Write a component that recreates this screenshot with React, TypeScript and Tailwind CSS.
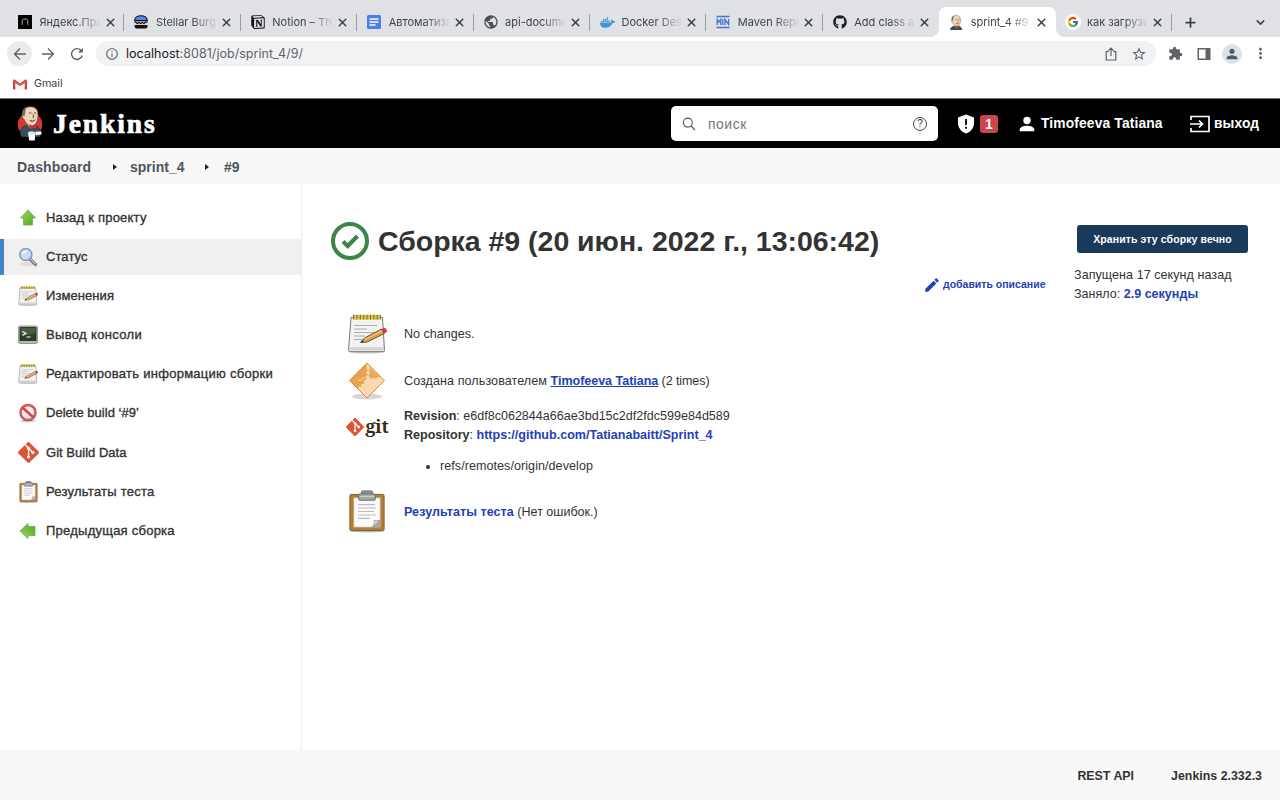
import type { ReactNode } from 'react';
import { X, Plus, ChevronDown } from 'lucide-react';
import { FaDocker, FaGithub } from 'react-icons/fa';
import { FcGoogle } from 'react-icons/fc';
import { SiGit, SiNotion } from 'react-icons/si';
import {
  MdExtension,
  MdInfoOutline,
  MdModeEdit,
  MdMoreVert,
  MdPerson,
  MdPublic,
  MdStarBorder,
} from 'react-icons/md';

const svg = 'shrink-0 block';

function PracticumIcon() {
  return (
    <svg viewBox="0 0 14 14" className={`${svg} size-[14px]`}>
      <rect width="14" height="14" fill="#000" />
      <path d="M4.200 9.800V6c0-1.200.7-1.900 1.700-1.900h2.200c1 0 1.700.7 1.700 1.900v3.800" fill="none" stroke="#a9a9a9" strokeWidth="1" />
    </svg>
  );
}

function BurgerIcon() {
  return (
    <svg viewBox="0 0 14 14" className={`${svg} size-[14px]`}>
      <path d="M.7 5.600C.7 2.600 3.400.7 7 .7s6.300 1.900 6.300 4.900z" fill="#4c86ee" stroke="#111" strokeWidth="1.100" />
      <path d="M.4 7.200h1.500l1.300 1.500 1.700-1.500 1.700 1.500 1.700-1.500L10 8.700l1.500-1.500h2.100" fill="none" stroke="#111" strokeWidth="1.200" />
      <path d="M.5 10h13v1.500c0 1.200-1 2-2 2h-9c-1 0-2-.8-2-2z" fill="#111" />
    </svg>
  );
}

function DocsIcon() {
  return (
    <svg viewBox="0 0 14 14" className={`${svg} size-[14px]`}>
      <rect width="14" height="14" rx="1.500" fill="#4a80ec" />
      <path d="M2.500 4h9M2.500 7h9M2.500 10h6" stroke="#fff" strokeWidth="1.300" />
    </svg>
  );
}

function MavenIcon() {
  return (
    <svg viewBox="0 0 14 14" className={`${svg} size-[14px]`}>
      <path d="M.5 1.500h13M.5 12.500h13" stroke="#4376ce" strokeWidth="1.400" />
      <path d="M1.200 10V4.500L3 7l1.700-2.500V10M6.800 4v6M9 10V4.500l3.600 5V4" fill="none" stroke="#4376ce" strokeWidth="1.300" />
    </svg>
  );
}

function ButlerIcon({ className, disc }: { className: string; disc: boolean }) {
  return (
    <svg viewBox={disc ? '0 0 26 36' : '2 0 22 27'} className={`${svg} ${className}`}>
      {disc && <circle cx="13" cy="19" r="12.600" fill="#d33833" />}
      <path d="M3.500 24c2-3 5-4 8-4h6c3.500.6 5.500 3 6 6v5.500l-6 .5H5c-2-2-2.500-5-1.500-8z" fill="#335061" stroke="#1b2a35" strokeWidth=".7" />
      <path d="M10 18l3 6 4-5v-3h-6z" fill="#fff" />
      <path d="M5.500 8.500C5 3.500 8.500.8 13.500.8c5 0 7.700 3 7.700 7.500 0 6-1.600 12-6.200 12-4.300 0-6.800-3.300-8-6.600-1.500-.4-2.700-3.400-1.500-5.200z" fill="#f0d6b7" stroke="#5b4a3c" strokeWidth=".7" />
      <path d="M5.300 9.500C4.300 5 6.500 1.500 10.800 1.100c-2.500 1.700-2.700 3.900-2.600 6.400-.7.500-.8 2-.7 3.500-.8-.6-1.500-1.300-2.200-1.500z" fill="#6d6b6d" />
      <path d="M12 7.500q1.500-1 2.500 0M17 7.500q1.500-1 2.500 0M16 8.500l1 3-1.400.5M13 14.800q3 1.700 5.500-.7" fill="none" stroke="#4c3a30" strokeWidth=".9" />
      <path d="M12.500 15.200q3 2.400 5.500-.5" fill="none" stroke="#a55a4c" strokeWidth=".7" />
      <path d="M12.200 19.500l3.300 1.400 4-1.200.6 3.800-4.200-1-3.900 1.400z" fill="#d33833" stroke="#7e1512" strokeWidth=".4" />
      {disc && (
        <>
          <path d="M11 27h7.500l-.6 8.500h-5.800z" fill="#fff" />
          <path d="M11 27c2-1.300 5-1.300 7.500 0v2H11z" fill="#dce3e8" />
          <path d="M18.500 26.500l6-.5.500 3.200-6 .8z" fill="#f2f2f2" />
        </>
      )}
    </svg>
  );
}

type TabData = { title: string; icon: ReactNode; active?: boolean; divider?: boolean };

const tabs: TabData[] = [
  { title: 'Яндекс.Пра', icon: <PracticumIcon />, divider: true },
  { title: 'Stellar Burg', icon: <BurgerIcon />, divider: true },
  { title: 'Notion – Th', icon: <SiNotion className="size-[14px] text-[#111]" />, divider: true },
  { title: 'Автоматиза', icon: <DocsIcon />, divider: true },
  { title: 'api-docume', icon: <MdPublic className="-m-px size-4 text-[#4d5156]" />, divider: true },
  { title: 'Docker Des', icon: <FaDocker className="size-[15px] text-[#3d94d6]" />, divider: true },
  { title: 'Maven Repo', icon: <MavenIcon />, divider: true },
  { title: 'Add class a', icon: <FaGithub className="size-[14px] text-[#1b1f23]" /> },
  { title: 'sprint_4 #9', icon: <ButlerIcon className="h-[15px] w-[14px]" disc={false} />, active: true },
  {
    title: 'как загрузи',
    icon: (
      <span className="-m-px grid size-4 place-items-center rounded-full bg-white">
        <FcGoogle className="size-3" />
      </span>
    ),
    divider: true,
  },
];

function Tab({ title, icon, active, divider }: TabData) {
  return (
    <div
      className={`relative mt-[7px] flex h-[30px] w-[116.400px] shrink-0 items-center pl-[10px] ${
        active ? 'rounded-t-[7px] bg-white' : ''
      }`}
    >
      {active && (
        <>
          <span className="absolute bottom-0 -left-2 size-2 bg-[radial-gradient(circle_at_0_0,transparent_7.500px,white_8px)]" />
          <span className="absolute -right-2 bottom-0 size-2 bg-[radial-gradient(circle_at_100%_0,transparent_7.500px,white_8px)]" />
        </>
      )}
      <span className="grid h-4 w-[14px] place-items-center">{icon}</span>
      <span className="ml-[7.500px] w-[60px] text-[11px] leading-4 whitespace-nowrap text-[#3f4246] [mask-image:linear-gradient(to_right,black_36px,transparent_62px)]">
        {title}
      </span>
      <X className="ml-[4px] size-[13px] text-[#3c4043]" strokeWidth={2.700} />
      {divider && <span className="absolute top-[7px] right-0 h-[17px] w-px bg-[#9b9ea3]" />}
    </div>
  );
}

function BrowserChrome() {
  return (
    <div className="font-[Inter,sans-serif]">
      <div className="flex h-[37px] bg-[#dfe1e5] pl-2">
        {tabs.map((t) => (
          <Tab key={t.title} {...t} />
        ))}
        <Plus className="mt-[15px] ml-[11px] size-[15px] text-[#3c4043]" strokeWidth={2.800} />
        <ChevronDown className="mt-[16px] mr-[13px] ml-auto size-[13px] text-[#3c4043]" strokeWidth={2.800} />
      </div>
      <div className="flex h-[33px] items-center bg-white pr-[11px] pl-[7px] text-[#5f6368]">
        <span className="grid size-[25px] place-items-center rounded-full bg-[#ebebec]">
          <svg viewBox="0 0 14 14" className="size-[14px]" fill="none" stroke="#5f6368" strokeWidth="1.300">
            <path d="M13 7H1.500M7 1.500L1.500 7 7 12.500" />
          </svg>
        </span>
        <svg viewBox="0 0 14 14" className="ml-[9px] size-[14px]" fill="none" stroke="#5f6368" strokeWidth="1.300">
          <path d="M1 7h11.500M7 1.500L12.500 7 7 12.500" />
        </svg>
        <svg viewBox="0 0 14 14" className="ml-[15px] size-[14px]" fill="none" stroke="#5f6368" strokeWidth="1.400">
          <path d="M12.200 8.500A5.400 5.400 0 1 1 10.800 3.200L12 4.400" />
          <path d="M12.800.8v4.800H8z" fill="#5f6368" stroke="none" />
        </svg>
        <div className="ml-[12px] flex h-[25px] w-[1060px] items-center rounded-full bg-[#f1f2f4] pr-[9px] pl-[9px]">
          <MdInfoOutline className="size-[14px]" />
          <span className="ml-[7px] text-[12.500px] leading-4 tracking-[0.030px]">
            <span className="text-[#202124]">localhost</span>:8081/job/sprint_4/9/
          </span>
          <svg viewBox="0 0 14 14" className="ml-auto size-[14px]" fill="none" stroke="#5f6368" strokeWidth="1.200">
            <path d="M4.500 4.700H2.200v8.300h9.600V4.700H9.500M7 9V1.300M4.300 3.800L7 1.100l2.700 2.700" />
          </svg>
          <MdStarBorder className="ml-[13px] size-[16px]" />
        </div>
        <MdExtension className="ml-[12px] size-[15px]" />
        <svg viewBox="0 0 14 14" className="ml-[14px] size-[14px]">
          <path d="M.5 1h13v12H.5z M2 2.500v9h6.500v-9z" fill="#5f6368" fillRule="evenodd" />
        </svg>
        <span className="ml-[11px] grid size-5 shrink-0 place-items-center rounded-full bg-[#dfe1e6]">
          <MdPerson className="size-4 text-[#4d5a6e]" />
        </span>
        <MdMoreVert className="ml-[10px] size-[17px] shrink-0" />
      </div>
      <div className="flex h-7 items-center bg-white pl-[13px]">
        <svg viewBox="0 0 14 11" className="h-[11px] w-[14px]">
          <path d="M0 1.500h2.500V10.500H0z" fill="#c5443c" />
          <path d="M11.500 1.500H14v9h-2.500z" fill="#c5443c" />
          <path d="M2.500 4v6.500h9V4L7 7.500z" fill="#f1f1f1" />
          <path d="M0 1.500C0 .4 1.300.1 2.200.8L7 4.500 11.800.8c.9-.7 2.200-.4 2.200.7v1.300L7 7 0 2.800z" fill="#db4d42" />
        </svg>
        <span className="ml-[7px] text-[10.700px] leading-4 text-[#3c4043]">Gmail</span>
      </div>
    </div>
  );
}

function Header() {
  return (
    <header className="flex h-[50px] items-center border-t border-[#777] bg-black pl-[17px] text-white">
      <ButlerIcon className="h-[35px] w-[26px]" disc />
      <span className="ml-[10px] font-['Liberation_Serif',serif] text-[27.500px] leading-7 font-bold tracking-[1.900px] [-webkit-text-stroke:0.700px_white]">
        Jenkins
      </span>
      <div className="ml-auto flex h-[35px] w-[267px] items-center rounded-[5px] bg-white pr-[11px] pl-[11px]">
        <svg viewBox="0 0 14 14" className="size-[14px]" fill="none" stroke="#555" strokeWidth="1.100">
          <circle cx="5.800" cy="5.600" r="4.500" />
          <path d="M9 9l4 4" />
        </svg>
        <span className="ml-3 pt-px text-[14px] leading-4 tracking-[0.500px] text-[#757575]">поиск</span>
        <span className="ml-auto grid size-[14px] place-items-center rounded-full border border-[#444] text-[10px] leading-3 text-[#333]">?</span>
      </div>
      <svg viewBox="0 0 18 20" className="ml-[19px] h-5 w-[18px]">
        <path d="M9 .5l8 3V9c0 5-3.300 9-8 10.500C4.300 18 1 14 1 9V3.500z" fill="#fff" />
        <path d="M9 5v6M9 12.700v2" stroke="#000" strokeWidth="1.800" />
      </svg>
      <span className="ml-[5px] grid h-[18px] w-[18px] place-items-center rounded-[3px] bg-[#cc444c] text-[14px] leading-4 font-bold">1</span>
      <svg viewBox="0 0 16 16" className="ml-[21px] size-4">
        <circle cx="8" cy="4.500" r="3.700" fill="#fff" />
        <path d="M.7 15.300v-1.600c0-2.500 3.500-4 7.300-4s7.300 1.500 7.300 4v1.600z" fill="#fff" />
      </svg>
      <span className="ml-[6px] w-[124px] pt-px text-[13.800px] leading-4 font-bold tracking-[0.150px] whitespace-nowrap">Timofeeva Tatiana</span>
      <svg viewBox="0 0 20 18" className="ml-[25px] h-[18px] w-5" fill="none" stroke="#fff" strokeWidth="1.700">
        <path d="M1 5V1.500h18v15H1V13M0 9h12.500M9 5.500L12.500 9 9 12.500" />
      </svg>
      <span className="mr-[21px] ml-1 w-[45px] pt-px text-[13.800px] leading-4 font-bold tracking-[0.100px] whitespace-nowrap">выход</span>
    </header>
  );
}

function CrumbArrow() {
  return (
    <svg viewBox="0 0 4 6" className="h-[6px] w-1">
      <path d="M0 0l4 3-4 3z" fill="#222" />
    </svg>
  );
}

function Breadcrumbs() {
  return (
    <nav className="flex h-9 items-center bg-[#f8f8f8] pt-px pl-[17px] text-[14px] leading-4 font-bold text-[#4d545d]">
      <span className="w-[96px] tracking-[0.120px]">Dashboard</span>
      <CrumbArrow />
      <span className="ml-[13px] w-[75px]">sprint_4</span>
      <CrumbArrow />
      <span className="ml-[15px]">#9</span>
    </nav>
  );
}

function ArrowIcon({ left }: { left?: boolean }) {
  return (
    <svg viewBox="0 0 20 20" className={`${svg} size-5 ${left ? '-rotate-90' : ''}`}>
      <defs>
        <linearGradient id="leaf" x1="0" y1="0" x2="1" y2="1">
          <stop offset="0" stopColor="#9bd95c" />
          <stop offset="1" stopColor="#4fa51f" />
        </linearGradient>
      </defs>
      <path d="M10 2l7.500 8H14.500v7H5.500V10H2.500z" fill="url(#leaf)" stroke="#6fa854" strokeWidth=".8" />
    </svg>
  );
}

function SearchIcon() {
  return (
    <svg viewBox="0 0 20 20" className={`${svg} size-5`}>
      <ellipse cx="9" cy="17" rx="7" ry="2" fill="#ddd" />
      <path d="M12 12l5.500 5.500" stroke="#777" strokeWidth="3.200" strokeLinecap="round" />
      <path d="M12.500 12l5 5" stroke="#c6c6c6" strokeWidth="1.100" strokeLinecap="round" />
      <circle cx="7.800" cy="7.500" r="6" fill="#c6dcf7" stroke="#8d9ab2" strokeWidth="1.600" />
      <path d="M4 7c.5-3 3-4 6-3.200C8.500 6 6 7.500 4 7z" fill="#eef5fd" />
    </svg>
  );
}

function NotepadIcon({ className }: { className: string }) {
  return (
    <svg viewBox="0 0 40 40" className={`${svg} ${className}`}>
      <ellipse cx="20" cy="37.500" rx="18" ry="2" fill="#aaa" opacity=".6" />
      <path d="M4 3.500h31.500l2 33c0 .8-.5 1.200-1.200 1.200H2.700c-.8 0-1.200-.5-1.200-1.200z" fill="#f3f3f3" stroke="#777" strokeWidth="1" />
      <path d="M2.500 33h34.500l.3 3.500H2.300z" fill="#d5d5d5" />
      <path d="M7 11.500h23M7 15h13M7 18.500h20M7 22h11M7 25.500h9" stroke="#a5a5a5" strokeWidth=".9" />
      <path d="M6 3.200h28" stroke="#d9c452" strokeWidth="4.800" />
      <path d="M6 3.200h28" stroke="#7a6a1f" strokeWidth="4.800" strokeDasharray="1 2.400" />
      <path d="M13.500 28.500l4-4.500L34.500 15l2.800 4.500-17 8.500z" fill="#d2a257" stroke="#6c4a17" strokeWidth=".9" />
      <path d="M18 25.500l17.500-9" stroke="#f1cd7b" strokeWidth="1.300" />
      <path d="M13.500 28.500l2-2.300 1.300 1.600z" fill="#222" />
      <path d="M34 15.200l3-1.500c2 0 3.300 2.500 2.800 4.200l-2.500 1.600z" fill="#d9383a" />
    </svg>
  );
}

function TerminalIcon() {
  return (
    <svg viewBox="0 0 20 20" className={`${svg} size-5`}>
      <rect x=".4" y="1" width="19.200" height="17.500" rx="1.800" fill="#b8bab4" stroke="#85877f" strokeWidth=".8" />
      <rect x="2" y="2.600" width="16" height="13" fill="#2d4029" stroke="#1e2a1b" strokeWidth=".8" />
      <path d="M2.500 3h15v5q-7 2-15 2z" fill="#5c7154" opacity=".6" />
      <path d="M4.500 6.500l3.300 2-3.300 2M8.500 12h4" fill="none" stroke="#fff" strokeWidth="1.200" />
    </svg>
  );
}

function ForbidIcon() {
  return (
    <svg viewBox="0 0 20 20" className={`${svg} size-5`}>
      <ellipse cx="10" cy="18" rx="8" ry="1.300" fill="#ccc" />
      <circle cx="10" cy="9.500" r="7.500" fill="#f3eded" stroke="#c03a3a" strokeWidth="2.400" />
      <circle cx="10" cy="9.500" r="7.500" fill="none" stroke="#de7a78" strokeWidth="1" />
      <path d="M5 5l10 9" stroke="#cc4a49" strokeWidth="2.600" />
    </svg>
  );
}

function ClipboardIcon({ className }: { className: string }) {
  return (
    <svg viewBox="0 0 38 44" className={`${svg} ${className}`}>
      <ellipse cx="19" cy="42" rx="18" ry="1.500" fill="#bbb" />
      <rect x="1.500" y="4.500" width="35" height="37" rx="1.500" fill="#b07f3d" stroke="#8a5c20" strokeWidth="1" />
      <path d="M5.500 8h27v30h-27z" fill="#fbfbfb" stroke="#ccb083" strokeWidth=".6" />
      <path d="M10 15h17M10 18.500h18M10 22h16M10 25.500h18M10 29h12" stroke="#bbb" strokeWidth="1.100" />
      <path d="M32.500 31v7h-8.500c3-.5 1.500-6 3-7z" fill="#a9a9a3" />
      <path d="M32.500 31c-3 1.500-6 .5-6.300-.4.6 3-.2 7-2.200 7.400z" fill="#dededa" stroke="#888" strokeWidth=".5" />
      <rect x="13.500" y="1" width="11" height="5" rx="1" fill="#909692" stroke="#555a57" strokeWidth=".9" />
      <rect x="10.500" y="4" width="17" height="6.500" rx="1" fill="#a3a9a5" stroke="#636865" strokeWidth=".9" />
      <path d="M11.500 6.500h15" stroke="#d4d8d5" strokeWidth="1" />
    </svg>
  );
}

const menu: { label: string; icon: ReactNode; selected?: boolean; spacing: string }[] = [
  { label: 'Назад к проекту', icon: <ArrowIcon />, spacing: 'tracking-[0.220px]' },
  { label: 'Статус', icon: <SearchIcon />, selected: true, spacing: 'tracking-[0.080px]' },
  { label: 'Изменения', icon: <NotepadIcon className="size-5" />, spacing: 'tracking-[0.080px]' },
  { label: 'Вывод консоли', icon: <TerminalIcon />, spacing: 'tracking-[0.350px]' },
  { label: 'Редактировать информацию сборки', icon: <NotepadIcon className="size-5" />, spacing: 'tracking-[0.270px]' },
  { label: 'Delete build ‘#9’', icon: <ForbidIcon />, spacing: 'tracking-[0.020px]' },
  { label: 'Git Build Data', icon: <SiGit className="size-[21px] text-[#dd5336]" />, spacing: 'tracking-[0.020px]' },
  { label: 'Результаты теста', icon: <ClipboardIcon className="h-[22px] w-[19px]" />, spacing: 'tracking-[0.240px]' },
  { label: 'Предыдущая сборка', icon: <ArrowIcon left />, spacing: 'tracking-[0.240px]' },
];

function Sidebar() {
  return (
    <aside className="flex w-[302px] shrink-0 flex-col gap-[3.100px] border-r border-[#eeeeee] pt-4">
      {menu.map((m) => (
        <div
          key={m.label}
          className={`flex h-9 items-center border-l-4 pl-[14px] ${m.selected ? 'border-[#4383cc] bg-[#f0f0f0]' : 'border-transparent'}`}
        >
          <span className="grid w-5 place-items-center">{m.icon}</span>
          <span
            className={`ml-2 text-[13px] leading-4 whitespace-nowrap text-[#333] [-webkit-text-stroke:0.350px_#333] ${m.spacing}`}
          >
            {m.label}
          </span>
        </div>
      ))}
    </aside>
  );
}

function UserCauseIcon() {
  return (
    <svg viewBox="0 0 38 38" className="h-[38px] w-[38px]">
      <ellipse cx="19" cy="34.500" rx="15" ry="3" fill="#999" opacity=".4" />
      <path d="M19 1l17.500 17.500L19 36 1.500 18.500z" fill="#fad9ae" />
      <path d="M19 1.500L1.800 18.500l8 8 1.500-2 2 .5 0-3 3-.5-.500-3 3-1-1.500-3 2.500-1.500-2-2.500 2-2-1.500-2.500z" fill="#e9a24f" />
      <path d="M21 4l11.500 11.500-3-.5-1.500 2-2.500-1.500-2 1.500-2-1.500-1-2.500 1.500-2-1.500-2.500 1.500-2z" fill="#eba857" />
      <path d="M10 18l3 1 1-3 3 0" fill="none" stroke="#f7d7a8" strokeWidth="1" />
      <path d="M19 1l17.500 17.500L19 36 1.500 18.500z" fill="none" stroke="#d98b45" strokeWidth="1" />
    </svg>
  );
}

function Row({ icon, className, children }: { icon: ReactNode; className: string; children: ReactNode }) {
  return (
    <div className={`flex items-center ${className}`}>
      <span className="mr-px grid w-[72px] shrink-0 place-items-center">{icon}</span>
      <div>{children}</div>
    </div>
  );
}

function Main() {
  return (
    <main className="flex-1 pl-[29px] text-[12.550px] leading-[19px] text-[#333]">
      <section className="flex h-[126px]">
        <div className="flex w-[715px] flex-col pt-[38px]">
          <h1 className="flex h-[38px] items-center whitespace-nowrap">
            <svg viewBox="0 0 38 38" className="size-[38px]" fill="none" stroke="#3b8549">
              <circle cx="19" cy="19" r="17" strokeWidth="4" />
              <path d="M12 19.500l4.700 4.500L26.500 14" strokeWidth="4.200" />
            </svg>
            <span className="ml-[9px] text-[28.500px] leading-8 font-bold tracking-[-0.020px]">Сборка #9 (20 июн. 2022 г., 13:06:42)</span>
          </h1>
          <a className="mt-[15px] flex items-center gap-[2px] self-end text-[10.500px] font-bold whitespace-nowrap text-[#1d42b5]">
            <MdModeEdit className="size-[18px]" />
            <span className="w-[103px]">добавить описание</span>
          </a>
        </div>
        <div className="ml-7 pt-[41px] whitespace-nowrap">
          <button className="ml-[3px] block h-7 w-[171px] rounded-[3px] bg-[#193b59] text-[10.500px] leading-4 font-bold tracking-[0.100px] text-white">
            Хранить эту сборку вечно
          </button>
          <div className="mt-[13px]">
            <div className="tracking-[0.050px]">Запущена 17 секунд назад</div>
            <div>
              Заняло: <b className="text-[#1d42b5]">2.9 секунды</b>
            </div>
          </div>
        </div>
      </section>
      <Row className="h-[47px] pt-px" icon={<NotepadIcon className="-mt-px size-10" />}>
        <div className="pt-px">No changes.</div>
      </Row>
      <Row className="h-[47px]" icon={<UserCauseIcon />}>
        <div className="pt-[2px]">
          <span className="tracking-[0.080px]">Создана пользователем </span>
          <b className="tracking-[-0.040px] text-[#1d42b5] underline">Timofeeva Tatiana</b>
          <span className="tracking-[-0.100px]"> (2 times)</span>
        </div>
      </Row>
      <Row
        className="h-[46px]"
        icon={
          <span className="flex items-center gap-[2px]">
            <SiGit className="size-[18px] text-[#dd5336]" />
            <span className="-mt-[2px] font-['Noto_Serif','DejaVu_Serif',serif] text-[18px] leading-5 font-bold tracking-[-0.300px] text-[#3a2a18]">
              git
            </span>
          </span>
        }
      >
        <div className="pb-[2px]">
          <div>
            <b>Revision</b>: e6df8c062844a66ae3bd15c2df2fdc599e84d589
          </div>
          <div>
            <b>Repository</b>: <b className="text-[#1d42b5]">https://github.com/Tatianabaitt/Sprint_4</b>
          </div>
        </div>
      </Row>
      <ul className="mt-[7px] ml-[109px] list-disc">
        <li className="tracking-[0.060px]">refs/remotes/origin/develop</li>
      </ul>
      <Row className="mt-[12px] h-[47px]" icon={<ClipboardIcon className="h-[43px] w-[38px]" />}>
        <div className="pt-[2px]">
          <b className="tracking-[0.060px] text-[#1d42b5]">Результаты теста</b> (Нет ошибок.)
        </div>
      </Row>
    </main>
  );
}

export default function App() {
  return (
    <div className="flex h-screen w-[1280px] flex-col overflow-hidden bg-white font-['Liberation_Sans',Arial,sans-serif]">
      <BrowserChrome />
      <Header />
      <Breadcrumbs />
      <div className="flex min-h-0 flex-1">
        <Sidebar />
        <Main />
      </div>
      <footer className="flex h-[51px] items-center justify-end gap-[37px] bg-[#f8f8f8] pt-[2px] pr-[18px] text-[12.400px] leading-4 font-bold text-[#333]">
        <span>REST API</span>
        <span>Jenkins 2.332.3</span>
      </footer>
    </div>
  );
}
